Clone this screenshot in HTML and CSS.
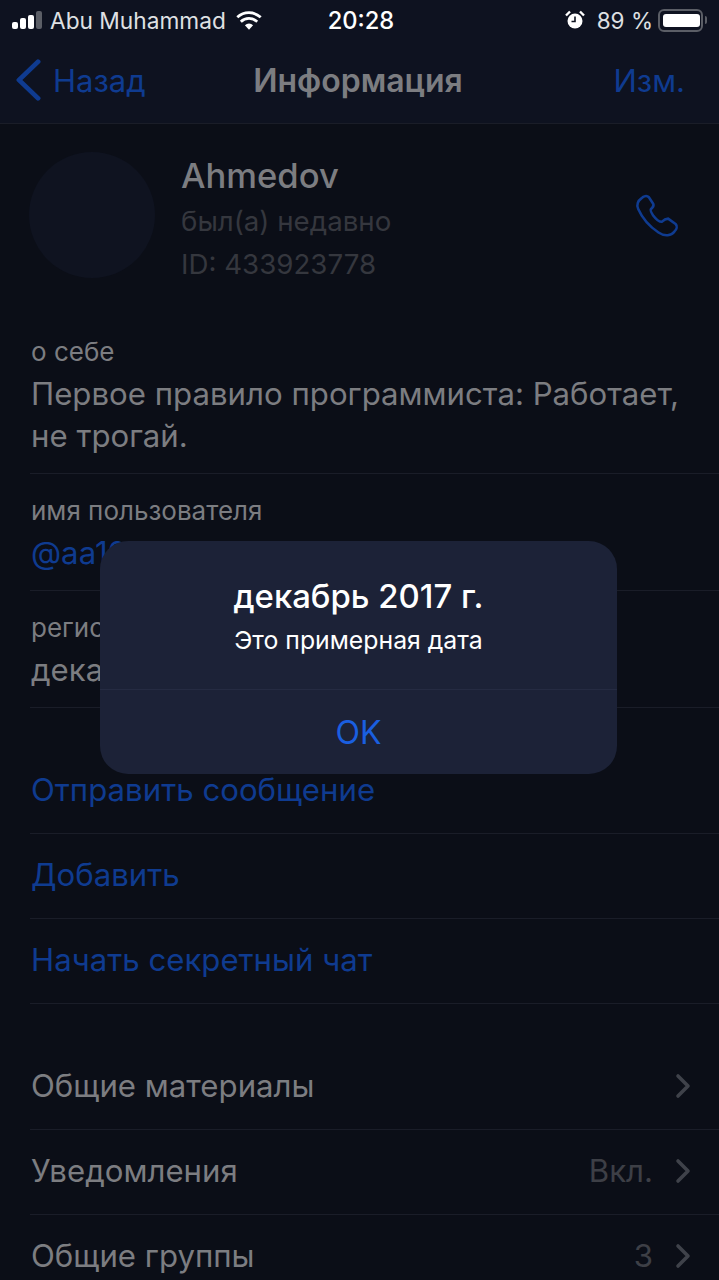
FILE: index.html
```html
<!DOCTYPE html>
<html lang="ru">
<head>
    <meta charset="UTF-8">
    <meta name="viewport" content="width=device-width, initial-scale=1.0">
    <title>Информация</title>
    <link rel="stylesheet" href="styles.css">
</head>
<body>
    <div class="page">
        <div class="status-bar">
            <div class="status-left">
                <div class="signal">
                    <span class="bar bar-1"></span>
                    <span class="bar bar-2"></span>
                    <span class="bar bar-3"></span>
                    <span class="bar bar-4"></span>
                </div>
                <span class="carrier">Abu Muhammad</span>
                <svg class="wifi" width="26" height="19" viewBox="0 0 28 20">
                    <path d="M14 20l-4.4-4.9a6.4 6.4 0 0 1 8.8 0z" fill="#fff"/>
                    <path d="M5.2 11.3a12.6 12.6 0 0 1 17.6 0" fill="none" stroke="#fff" stroke-width="3"/>
                    <path d="M1.4 6.6a18.4 18.4 0 0 1 25.2 0" fill="none" stroke="#fff" stroke-width="3"/>
                </svg>
            </div>
            <span class="time">20:28</span>
            <div class="status-right">
                <svg class="alarm" width="20" height="20" viewBox="0 0 20 20">
                    <circle cx="10" cy="11" r="7.5" fill="#fff"/>
                    <path d="M10 6.5V11.5H6.5" fill="none" stroke="#0e1220" stroke-width="1.6"/>
                    <path d="M1 5.5L5 1.5M19 5.5L15 1.5" stroke="#fff" stroke-width="2.4"/>
                </svg>
                <span class="battery-text">89 %</span>
                <div class="battery"><div class="battery-fill"></div></div>
                <span class="battery-nub"></span>
            </div>
        </div>

        <div class="nav-bar">
            <div class="nav-back">
                <svg width="26" height="42" viewBox="0 0 26 46" preserveAspectRatio="none">
                    <path d="M23 3L4 23l19 20" fill="none" stroke="#0f3b90" stroke-width="5" stroke-linecap="round" stroke-linejoin="round"/>
                </svg>
                <span>Назад</span>
            </div>
            <div class="nav-title">Информация</div>
            <div class="nav-edit">Изм.</div>
        </div>

        <div class="profile">
            <div class="avatar"></div>
            <div class="profile-info">
                <div class="profile-name">Ahmedov</div>
                <div class="profile-sub">был(а) недавно</div>
                <div class="profile-sub">ID: 433923778</div>
            </div>
            <svg class="phone" width="47" height="47" viewBox="0 0 44 44">
                <path d="M6 5C8 3 11 2 13 4l4 6c1 2 0 3-2 5-1 1 0 3 2 6 3 4 6 6 8 6 2-2 3-3 6-3l7 5c2 2 1 5-1 7-3 4-9 5-15 1C13 31 7 24 3 15 1 11 3 7 6 5z" fill="none" stroke="#0f3b90" stroke-width="2.4" stroke-linejoin="round"/>
            </svg>
        </div>

        <div class="info-list">
            <div class="info-row">
                <div class="info-label">о себе</div>
                <div class="info-value">Первое правило программиста: Работает, не трогай.</div>
            </div>
            <div class="info-row">
                <div class="info-label">имя пользователя</div>
                <div class="info-value link">@aa1000000</div>
            </div>
            <div class="info-row">
                <div class="info-label">регистрация</div>
                <div class="info-value">декабрь 2017 г.</div>
            </div>
        </div>

        <div class="action-list">
            <div class="list-row link">Отправить сообщение</div>
            <div class="list-row link">Добавить</div>
            <div class="list-row link">Начать секретный чат</div>
        </div>

        <div class="menu-list">
            <div class="list-row">
                <span class="row-title">Общие материалы</span>
                <svg class="chevron" width="16" height="26" viewBox="0 0 16 26"><path d="M3 3l10 10L3 23" fill="none" stroke="#3f424a" stroke-width="3.6" stroke-linecap="round" stroke-linejoin="round"/></svg>
            </div>
            <div class="list-row">
                <span class="row-title">Уведомления</span>
                <span class="row-detail">Вкл.</span>
                <svg class="chevron" width="16" height="26" viewBox="0 0 16 26"><path d="M3 3l10 10L3 23" fill="none" stroke="#3f424a" stroke-width="3.6" stroke-linecap="round" stroke-linejoin="round"/></svg>
            </div>
            <div class="list-row">
                <span class="row-title">Общие группы</span>
                <span class="row-detail">3</span>
                <svg class="chevron" width="16" height="26" viewBox="0 0 16 26"><path d="M3 3l10 10L3 23" fill="none" stroke="#3f424a" stroke-width="3.6" stroke-linecap="round" stroke-linejoin="round"/></svg>
            </div>
        </div>

        <div class="dialog">
            <div class="dialog-body">
                <div class="dialog-title">декабрь 2017 г.</div>
                <div class="dialog-text">Это примерная дата</div>
            </div>
            <div class="dialog-button">OK</div>
        </div>
    </div>
</body>
</html>
```

FILE: styles.css
```css
body {
    margin: 0;
    padding: 0;
    background-color: #0b0e17;
    font-family: Inter, "Noto Sans", sans-serif;
    color: #7c7d81;
}

.page {
    position: relative;
    width: 719px;
    height: 1280px;
    overflow: hidden;
}

/* status bar */
.status-bar {
    display: grid;
    grid-template-columns: 1fr auto 1fr;
    align-items: center;
    height: 40px;
    padding: 0 12px;
    background-color: #0e1220;
    color: #fff;
}

.status-left,
.status-right {
    display: flex;
    align-items: center;
}

.status-right {
    justify-content: flex-end;
}

.signal {
    display: flex;
    align-items: flex-end;
    gap: 2px;
    height: 18px;
}

.bar {
    width: 6px;
    border-radius: 2px;
    background-color: #fff;
}

.bar-1 { height: 7px; }
.bar-2 { height: 11px; }
.bar-3 { height: 14px; }
.bar-4 { height: 18px; background-color: #5b5e66; }

.carrier {
    margin-left: 8px;
    font-size: 22.7px;
    color: #dfe0e3;
}

.wifi {
    margin-left: 10px;
}

.time {
    margin-left: 3px;
    font-size: 23.7px;
    font-weight: 500;
}

.battery-text {
    margin-left: 12px;
    font-size: 22.5px;
    color: #dfe0e3;
}

.battery {
    box-sizing: border-box;
    width: 45px;
    height: 23px;
    margin-left: 5px;
    padding: 3px;
    border: 2px solid #5b5e66;
    border-radius: 6px;
}

.battery-fill {
    width: 37px;
    height: 100%;
    border-radius: 3px;
    background-color: #fff;
}

.battery-nub {
    width: 2px;
    height: 8px;
    margin-left: 2px;
    border-radius: 0 2px 2px 0;
    background-color: #5b5e66;
}

/* nav bar */
.nav-bar {
    display: grid;
    grid-template-columns: 1fr auto 1fr;
    align-items: center;
    height: 80px;
    padding: 0 34px 3px 15px;
    background-color: #0e1220;
    border-bottom: 1px solid #1a1d28;
    font-size: 31px;
    color: #0f3b90;
}

.nav-back {
    display: flex;
    align-items: center;
    gap: 12px;
}

.nav-title {
    margin-left: 16px;
    font-size: 32px;
    font-weight: 600;
    color: #7c7d81;
}

.nav-edit {
    text-align: right;
}

/* profile */
.profile {
    display: flex;
    align-items: flex-start;
    margin: 28px 37px 29px 29px;
}

.avatar {
    width: 126px;
    height: 126px;
    border-radius: 50%;
    background-color: #0f1320;
}

.profile-info {
    flex: 1;
    margin-left: 26px;
}

.profile-name {
    font-size: 34.6px;
    font-weight: 500;
    line-height: 47px;
}

.profile-sub {
    font-size: 27.7px;
    line-height: 43px;
    color: #35373e;
}

.profile-name + .profile-sub {
    margin-top: 1px;
}

.phone {
    margin-top: 41px;
}

/* list rows */
.info-row,
.list-row {
    margin-left: 30px;
    padding-left: 1px;
    border-bottom: 1px solid #1a1d28;
}

.info-row {
    padding-top: 19px;
    padding-bottom: 16px;
}

.info-label {
    margin-bottom: 3px;
    font-size: 26px;
    line-height: 36px;
}

.info-value {
    padding-right: 30px;
    font-size: 31.2px;
    line-height: 42px;
}

.link {
    color: #0f3b90;
}

.action-list,
.menu-list {
    margin-top: 41px;
}

.list-row {
    display: flex;
    align-items: center;
    height: 81px;
    padding-right: 28px;
    padding-bottom: 3px;
    font-size: 31.2px;
}

.row-title {
    flex: 1;
}

.row-detail {
    margin-right: 22px;
    color: #3d3f46;
}

/* dialog */
.dialog {
    position: absolute;
    left: 100px;
    top: 541px;
    width: 517px;
    height: 233px;
    border-radius: 28px;
    background-color: #1c2237;
    color: #fff;
    text-align: center;
}

.dialog-body {
    box-sizing: border-box;
    height: 149px;
    padding-top: 32px;
    border-bottom: 1px solid #252b42;
}

.dialog-title {
    font-size: 32.9px;
    font-weight: 500;
    line-height: 46px;
}

.dialog-text {
    font-size: 24.8px;
    line-height: 42px;
}

.dialog-button {
    font-size: 32px;
    line-height: 85px;
    color: #1a5fe0;
}
```
